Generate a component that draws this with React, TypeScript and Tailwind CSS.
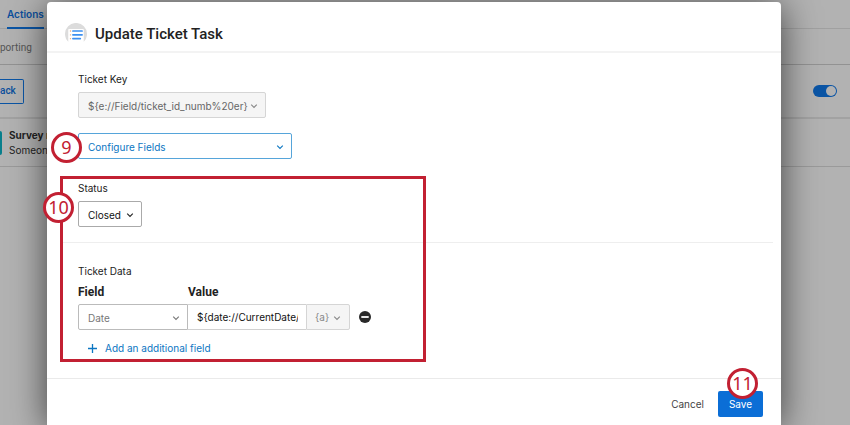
import React from "react";

function Chevron({ className }: { className: string }) {
  return (
    <svg viewBox="0 0 8 8" className={`pointer-events-none absolute size-2 ${className}`} fill="none" stroke="currentColor" strokeWidth="1.1" aria-hidden="true">
      <path d="M1.2 2.6 4 5.4 6.8 2.6" />
    </svg>
  );
}

function Step({ n, className }: { n: number; className: string }) {
  return (
    <span className={`absolute z-10 flex size-[31px] items-center justify-center rounded-full border-3 border-[#c22032] bg-white pb-px font-['Noto_Sans',sans-serif] text-[18px] leading-none text-[#c22032] ${className}`}>
      {n}
    </span>
  );
}

function Backdrop() {
  return (
    <div className="min-h-screen bg-[#b2b2b2] text-[#222]">
      <nav className="h-[29px] border-b border-[#a0a0a0] pl-[7px]">
        <a href="#actions" className="inline-block h-[29px] border-b-2 border-[#0b55a5] pt-[6px] text-[10px] leading-4 font-semibold text-[#0b4f9c]">Actions</a>
      </nav>
      <div className="h-9 border-b border-[#929292] pt-[11px] font-[Roboto,sans-serif] text-[10px] leading-4 text-[#555]">porting</div>
      <div className="flex h-[54px] items-center justify-between border-b-2 border-[#a2a2a2] pr-[13px]">
        <button className="h-[25px] w-6 rounded-r-xs border border-l-0 border-[#0b55a5] text-left font-[Roboto,sans-serif] text-[10px] font-medium text-[#0b4f9c]">ack</button>
        <input type="checkbox" role="switch" defaultChecked aria-label="Enabled" className="relative h-3 w-6 appearance-none rounded-full bg-[#0b55a5] before:absolute before:top-px before:right-px before:size-[10px] before:rounded-full before:bg-[#b2b2b2]" />
      </div>
      <div className="flex h-12 items-center border-b border-[#9a9a9a]">
        <span className="h-6 w-[2px] rounded-r-xs bg-[#087f8c]" />
        <div className="pl-[7px] text-[10px] leading-[15px]">
          <p className="font-bold">Survey r</p>
          <p>Someone</p>
        </div>
      </div>
    </div>
  );
}

export default function App() {
  return (
    <main className="relative min-h-screen overflow-hidden font-[Inter,sans-serif] text-[10px] leading-4 text-[#222]">
      <Backdrop />
      <div className="absolute inset-0 pt-[2px] pr-[69px] pl-[47px]">
        <section role="dialog" aria-labelledby="title" className="flex h-full flex-col rounded-t-[4px] bg-white shadow-[0_4px_36px_rgba(0,0,0,0.65)]">
          <header className="flex h-[51px] items-center gap-2 border-b-2 border-[#f3f3f3] pt-[14px] pl-[18px]">
            <svg viewBox="0 0 22 22" className="size-[22px]" aria-hidden="true">
              <path d="M3.5 19A11 11 0 1 1 18.5 19V6H3.5Z" fill="#dcdcdc" />
              <path d="M3.5 6.5h15v14h-15Z" fill="#fff" />
              <path d="M7.9 8h9.2M7.9 11.8h9.2M7.9 15.6h7.4" stroke="#3d90f0" strokeWidth="1.7" strokeLinecap="round" />
              <path d="M4.9 8h1.2M4.9 11.8h1.2M4.9 15.6h1.2" stroke="#f2b58a" strokeWidth="1.3" />
            </svg>
            <h1 id="title" className="font-[Roboto,sans-serif] text-[15px] leading-5 font-medium text-[#222]">Update Ticket Task</h1>
          </header>

          <div className="flex flex-col items-start pt-[18px] pl-[31px]">
            <label htmlFor="key">Ticket Key</label>
            <div className="relative mt-[5px] w-[188px] text-[#888]">
              <select id="key" disabled className="h-[26px] w-full appearance-none rounded-xs border border-[#d5d5d5] bg-[#f5f5f5] pt-px pl-[9px] text-[#666] opacity-100">
                <option>{"${e://Field/ticket_id_numb%20er}"}</option>
              </select>
              <Chevron className="top-[10px] right-2" />
            </div>
            <div className="relative mt-[15px] w-[214px] text-[#0b76c2]">
              <select aria-label="Configure fields" className="h-[26px] w-full appearance-none rounded-xs border border-[#56a5da] bg-white pt-px pl-[9px]">
                <option>Configure Fields</option>
              </select>
              <Chevron className="top-[10px] right-2" />
              <Step n={9} className="top-[-1px] -left-[27px]" />
            </div>
          </div>

          <div className="relative mt-[21px] pl-[31px]">
            <div className="pointer-events-none absolute -top-1 left-[13px] h-[186px] w-[366px] border-3 border-[#c22032]" />
            <Step n={10} className="top-3 -left-1" />
            <label htmlFor="status" className="block">Status</label>
            <div className="relative mt-[5px] w-16">
              <select id="status" className="h-[26px] w-full appearance-none rounded-xs border border-[#aaa] bg-white pt-px pl-[9px] text-[#111]">
                <option>Closed</option>
              </select>
              <Chevron className="top-[10px] right-2" />
            </div>
            <hr className="mt-[15px] mr-2 -ml-[15px] border-[#eee]" />
            <h2 className="mt-5">Ticket Data</h2>
            <div className="mt-[5px] flex font-[Roboto,sans-serif] text-[12px] font-bold">
              <span className="w-[110px]">Field</span>
              <span>Value</span>
            </div>
            <div className="mt-1 flex items-center">
              <div className="relative w-[110px] text-[#777]">
                <select aria-label="Field" className="h-[26px] w-full appearance-none rounded-l-xs border border-[#bbb] bg-white pt-px pl-[9px]">
                  <option>Date</option>
                </select>
                <Chevron className="top-[10px] right-2" />
              </div>
              <div className="h-[26px] w-[118px] border-y border-[#d0d0d0] pr-2 pl-[9px]">
                <input aria-label="Value" defaultValue="${date://CurrentDate/SL}" className="h-full w-full text-[#111]" />
              </div>
              <button className="relative h-[26px] w-[44px] rounded-r-xs border border-[#d5d5d5] bg-[#f5f5f5] pl-2 text-left text-[#888]">
                {"{a}"}
                <Chevron className="top-[9px] right-2" />
              </button>
              <button aria-label="Remove field" className="ml-[9px]">
                <svg viewBox="0 0 12 12" className="size-3"><circle cx="6" cy="6" r="6" fill="#292929" /><path d="M2.3 6h7.4" stroke="#fff" strokeWidth="1.8" /></svg>
              </button>
            </div>
            <button className="mt-[10px] ml-[10px] flex items-center gap-2 text-[#0b76c2]">
              <svg viewBox="0 0 9 9" className="size-[9px]" stroke="currentColor" strokeWidth="1.3" aria-hidden="true"><path d="M4.5 0v9M0 4.5h9" /></svg>
              Add an additional field
            </button>
          </div>

          <footer className="mt-[22px] flex items-center justify-end border-t border-[#eaeaea] pt-3 pr-[18px]">
            <button className="px-[14px] text-[#444]">Cancel</button>
            <div className="relative">
              <button className="block h-[26px] w-[45px] rounded-xs bg-[#0b6ed6] text-white">Save</button>
              <Step n={11} className="-top-[23px] left-[9px]" />
            </div>
          </footer>
        </section>
      </div>
    </main>
  );
}
